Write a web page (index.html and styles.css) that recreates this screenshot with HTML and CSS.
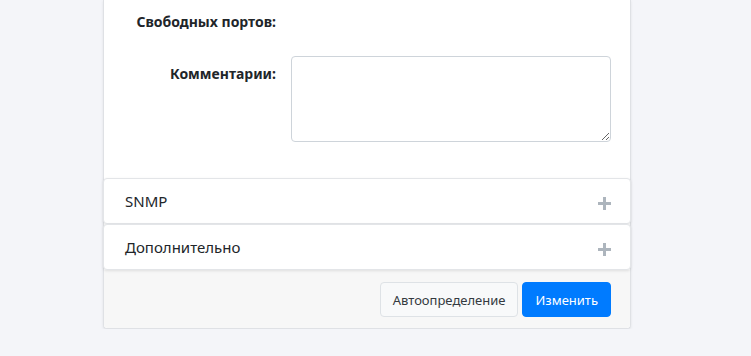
FILE: index.html
```html
<!DOCTYPE html>
<html lang="ru">
  <head>
    <meta charset="UTF-8" />
    <meta name="viewport" content="width=device-width, initial-scale=1.0" />
    <title>Изменить устройство</title>
    <link rel="stylesheet" href="styles.css">
  </head>
  <body>
    <div class="card">
      <form class="card-body">
        <div class="form-row">
          <label class="form-label">Свободных портов:</label>
          <div class="form-value"></div>
        </div>
        <div class="form-row">
          <label class="form-label" for="comment">Комментарии:</label>
          <textarea id="comment" class="form-control"></textarea>
        </div>
      </form>

      <div class="panel">
        <span class="panel-title">SNMP</span>
        <svg class="panel-icon" width="13" height="13" viewBox="0 0 13 13">
          <path d="M6.5 0v13M0 6.5h13" stroke="#adb5bd" stroke-width="3" />
        </svg>
      </div>
      <div class="panel">
        <span class="panel-title">Дополнительно</span>
        <svg class="panel-icon" width="13" height="13" viewBox="0 0 13 13">
          <path d="M6.5 0v13M0 6.5h13" stroke="#adb5bd" stroke-width="3" />
        </svg>
      </div>

      <div class="card-footer">
        <button type="button" class="btn btn-light">Автоопределение</button>
        <button type="button" class="btn btn-primary">Изменить</button>
      </div>
    </div>
  </body>
</html>
```

FILE: styles.css
```css
* {
  margin: 0;
  padding: 0;
  box-sizing: border-box;
}
body {
  font-family: "Noto Sans", "Open Sans", sans-serif;
  background-color: #f4f5f9;
  color: #212529;
}
.card {
  width: 528px;
  margin-left: 103px;
  background-color: #fff;
  border: 1px solid #dfe1e5;
  border-top: none;
  border-radius: 0 0 4px 4px;
  box-shadow: 0 1px 3px rgba(0, 0, 0, 0.08);
}
.card-body {
  padding: 4px 19px 36px 20px;
}
.form-row {
  display: flex;
  gap: 15px;
  margin-bottom: 16px;
  min-height: 36px;
}
.form-row:last-child {
  margin-bottom: 0;
}
.form-label {
  width: 152px;
  flex-shrink: 0;
  text-align: right;
  font-size: 14px;
  font-weight: bold;
  line-height: 20px;
  padding-top: 8px;
  color: #212529;
}
.form-value {
  flex: 1;
}
.form-control {
  flex: 1;
  height: 86px;
  border: 1px solid #ced4da;
  border-radius: 4px;
  font-family: inherit;
  font-size: 13px;
  padding: 6px 10px;
  resize: vertical;
}
.panel {
  display: flex;
  align-items: center;
  justify-content: space-between;
  height: 46px;
  margin: 0 -1px 0 -1px;
  padding: 0 19px 0 21px;
  background-color: #fff;
  border: 1px solid #e3e5e8;
  border-radius: 4px;
  box-shadow: 0 1px 3px rgba(0, 0, 0, 0.1);
  position: relative;
}
.panel-title {
  font-size: 15px;
  color: #212529;
}
.panel-icon {
  margin-top: 4px;
}
.card-footer {
  display: flex;
  justify-content: flex-end;
  gap: 4px;
  padding: 12px 19px 11px 20px;
  background-color: #f7f7f7;
  border-radius: 0 0 4px 4px;
}
.btn {
  height: 35px;
  padding: 0 12px;
  font-family: inherit;
  font-size: 13px;
  border-radius: 4px;
  cursor: pointer;
}
.btn-light {
  background-color: #f8f9fa;
  border: 1px solid #dee2e6;
  color: #343a40;
}
.btn-primary {
  background-color: #007bff;
  border: 1px solid #007bff;
  color: #fff;
}
```
